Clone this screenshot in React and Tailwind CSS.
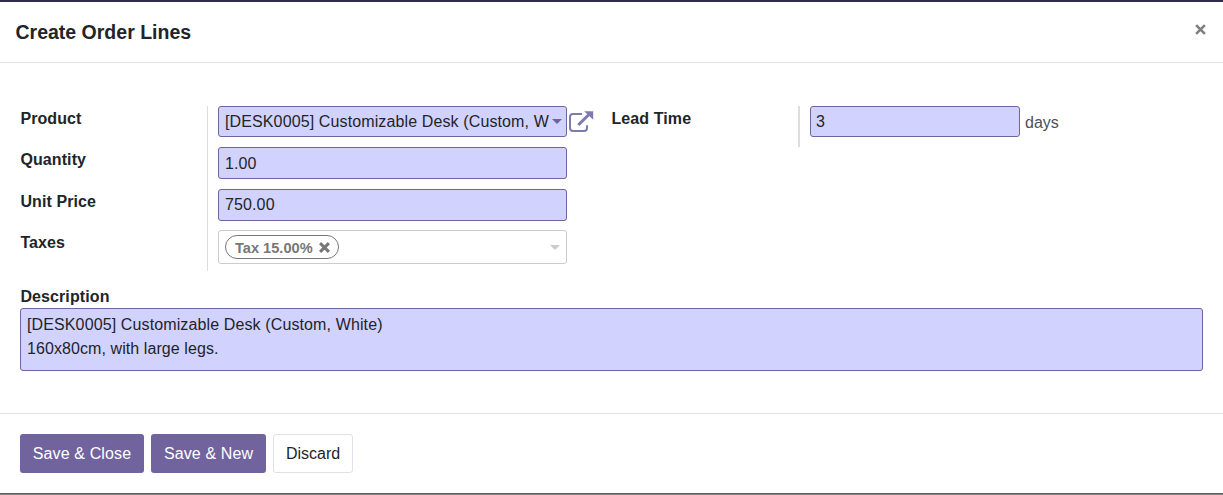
import React from "react";

const field =
  "flex items-center rounded-[3px] border border-[#71639e] bg-[#d2d2ff] px-[6px] text-[16px] tracking-[0.12px] text-[#212529]";

function Label({ children, className = "" }) {
  return (
    <div className={"w-[187px] shrink-0 pl-[0.4px] text-[16px] leading-[26px] font-bold tracking-[0.1px] text-[#212529] " + className}>
      {children}
    </div>
  );
}

function Caret({ className }) {
  return (
    <svg className={className} width="10" height="5" viewBox="0 0 10 5" fill="currentColor">
      <path d="M0 0h10L5 5z" />
    </svg>
  );
}

function Cross({ className, size, weight = 2.7 }) {
  return (
    <svg className={className} width={size} height={size} viewBox="0 0 10 10" fill="none" stroke="currentColor" strokeWidth={weight}>
      <path d="M1 1l8 8M9 1L1 9" />
    </svg>
  );
}

function ExternalLink() {
  return (
    <svg className="text-[#7c7bad]" width="26" height="24" viewBox="0 0 26 24" fill="none" stroke="currentColor">
      <path d="M14 4H5Q2 4 2 7v11Q2 21 5 21h11q3 0 3-3V15.2" strokeWidth="2" />
      <path d="M10.3 15L21.5 4" strokeWidth="3" />
      <path d="M16.2 1.2h9v8.6z" fill="currentColor" stroke="none" />
    </svg>
  );
}

export default function App() {
  return (
    <div className="flex h-[495px] w-full flex-col border-t-2 border-t-[#2f2a4b] bg-white font-['Liberation_Sans',Arial,sans-serif] text-[#212529]">
      <header className="flex h-[61px] shrink-0 items-center justify-between border-b border-[#dee2e6] pr-[17px] pl-[15.5px]">
        <h1 className="text-[19.5px] leading-[30px] font-bold">Create Order Lines</h1>
        <button aria-label="Close" className="-mt-[5px] text-[#7f7f7f]">
          <Cross size={11} weight={2.3} />
        </button>
      </header>

      <main className="flex h-[350px] shrink-0 flex-col px-5 pt-[43px]">
        <div className="flex h-[165px] items-start">
          <div className="box-content flex h-[165px] w-[187px] shrink-0 flex-col border-r border-[#dddddd]">
            <Label className="h-[41px]">Product</Label>
            <Label className="h-[42px]">Quantity</Label>
            <Label className="h-[41px]">Unit Price</Label>
            <Label className="h-[41px]">Taxes</Label>
          </div>
          <div className="ml-[10px] flex w-[349px] shrink-0 flex-col">
            <div className={field + " h-[31px] justify-between pr-1"}>
              <span className="w-[326px] overflow-hidden whitespace-nowrap">
                [DESK0005] Customizable Desk (Custom, W
              </span>
              <Caret className="shrink-0 text-[#71639e]" />
            </div>
            <div className={field + " mt-[10px] h-[32px] pt-px"}>1.00</div>
            <div className={field + " mt-[10px] h-[32px]"}>750.00</div>
            <div className="mt-[9px] flex h-[34px] items-center justify-between rounded-[3px] border border-[#cccccc] px-[6px]">
              <span className="flex h-6 w-[114px] items-center justify-between rounded-full border border-[#777777] pr-[8px] pl-[9px] text-[14.6px] font-bold whitespace-nowrap text-[#777777]">
                <span className="pt-[2px] leading-5">Tax 15.00%</span>
                <Cross size={11} />
              </span>
              <Caret className="text-[#cccccc]" />
            </div>
          </div>
          <div className="mt-[4px] ml-px w-[26px] shrink-0">
            <ExternalLink />
          </div>
          <div className="ml-[17px] h-[41px] w-[189px] shrink-0 border-r-2 border-[#dddddd]">
            <Label>Lead Time</Label>
          </div>
          <div className={field + " ml-[10px] h-[31px] w-[210px] pl-[5px]"}>3</div>
          <span className="mt-1 ml-[5px] text-[16px] leading-[26px] text-[#4c5056]">days</span>
        </div>

        <Label className="mt-[13px] h-6">Description</Label>
        <div className="h-[63px] rounded-[3px] border border-[#71639e] bg-[#d2d2ff] px-[6px] py-[4px] text-[16px] leading-6 tracking-[0.12px]">
          <p>[DESK0005] Customizable Desk (Custom, White)</p>
          <p className="tracking-[0.08px]">160x80cm, with large legs.</p>
        </div>
      </main>

      <footer className="flex h-[80px] shrink-0 items-start gap-[7px] border-t border-[#dee2e6] px-5 pt-5 text-[16px] tracking-[0.12px]">
        <button className="h-[39px] w-[124px] rounded-[3px] bg-[#71639e] text-white">Save &amp; Close</button>
        <button className="h-[39px] w-[115px] rounded-[3px] bg-[#71639e] text-white">Save &amp; New</button>
        <button className="h-[39px] w-[80px] rounded-[3px] border border-[#dee2e6] bg-white tracking-normal">Discard</button>
      </footer>
      <div className="h-[2px] shrink-0 border-t border-[#5f5e60] bg-[#858384]" />
    </div>
  );
}
